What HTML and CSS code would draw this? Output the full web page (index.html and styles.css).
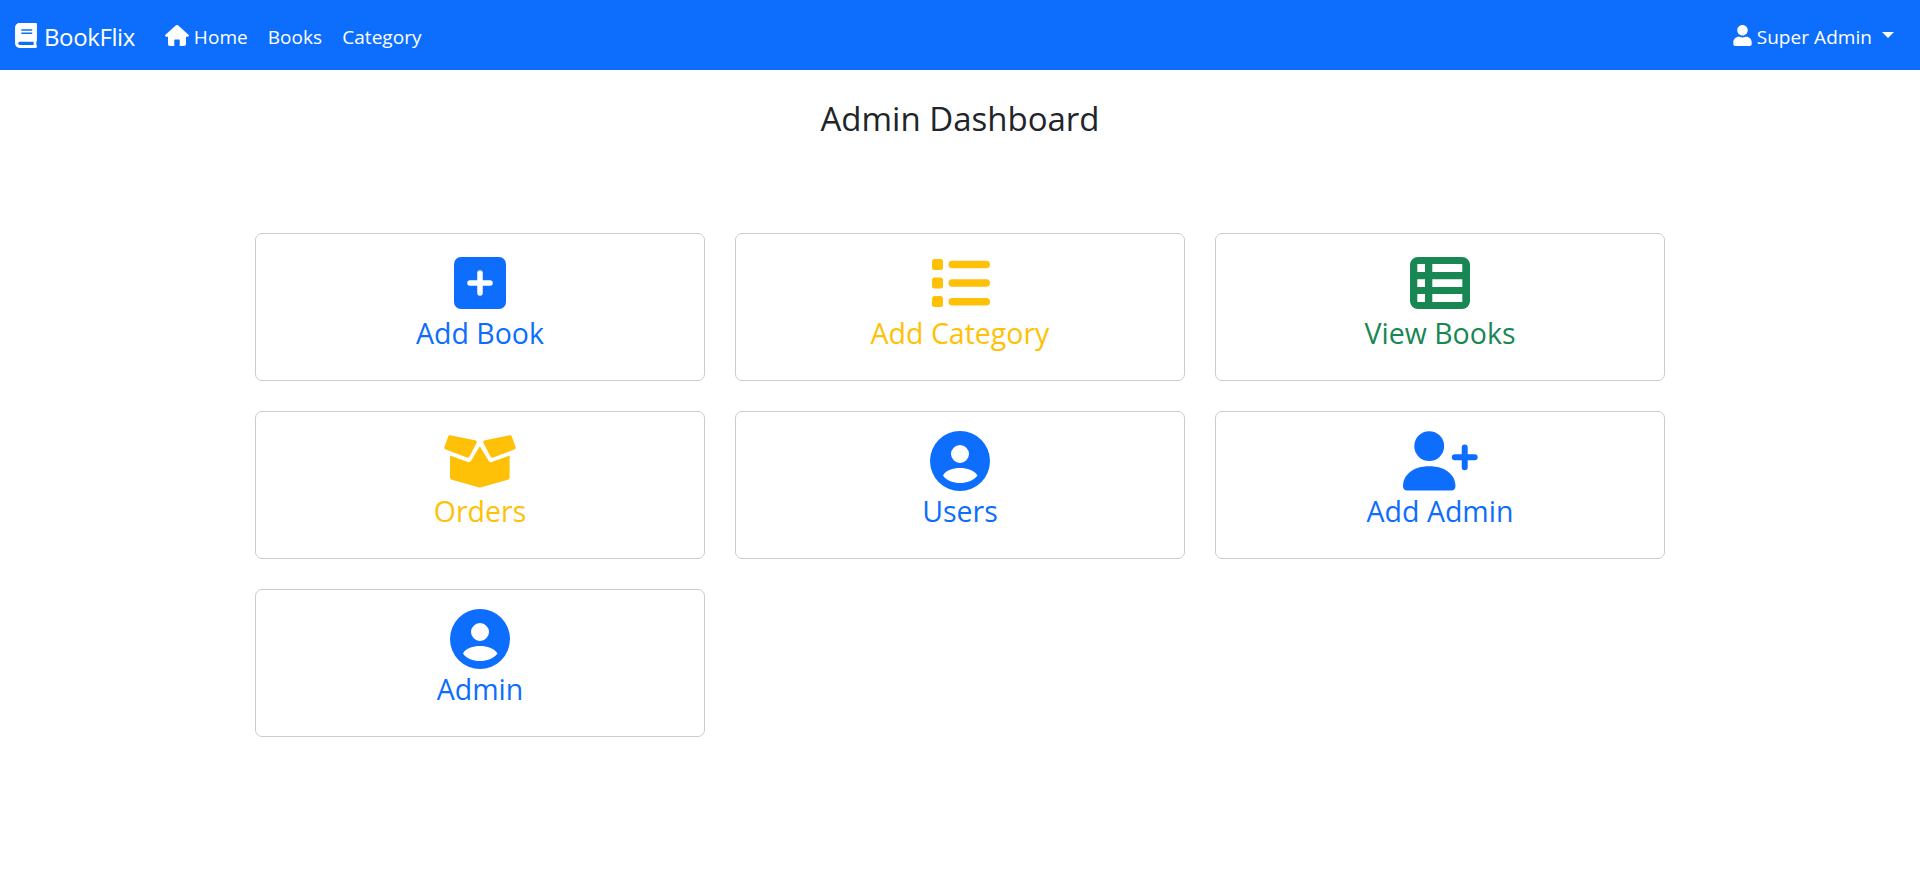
FILE: index.html
```html
<!DOCTYPE html>
<html lang="en">
	<head>
		<meta charset="utf-8">
		<title>BookFlix</title>
		<link rel="stylesheet" href="styles.css">
	</head>
	<body>
		<nav class="navbar">
			<a class="brand" href="#">
				<svg class="brand-icon" viewBox="0 0 448 512"><path d="M448 360V24c0-13.3-10.7-24-24-24H96C43 0 0 43 0 96v320c0 53 43 96 96 96h328c13.3 0 24-10.7 24-24v-16c0-7.5-3.5-14.3-8.9-18.7-4.2-15.4-4.2-59.3 0-74.7 5.4-4.3 8.9-11.1 8.9-18.6zM128 134c0-3.3 2.7-6 6-6h212c3.3 0 6 2.7 6 6v20c0 3.3-2.7 6-6 6H134c-3.3 0-6-2.7-6-6v-20zm0 64c0-3.3 2.7-6 6-6h212c3.3 0 6 2.7 6 6v20c0 3.3-2.7 6-6 6H134c-3.3 0-6-2.7-6-6v-20zm253.4 250H96c-17.7 0-32-14.3-32-32 0-17.6 14.4-32 32-32h285.4c-1.9 17.1-1.9 46.9 0 64z"/></svg>
				BookFlix
			</a>
			<a class="nav-link nav-home" href="#">
				<svg class="home-icon" viewBox="0 0 24 21"><path d="M10.700 0.500L0.500 9.700c-0.800 0.800-0.300 2 0.800 2H3v7.300c0 1.100 0.900 2 2 2h4.300v-5.500c0-0.600 0.400-1 1-1h3.400c0.600 0 1 0.400 1 1V21H19c1.100 0 2-0.900 2-2v-7.300h1.700c1.100 0 1.600-1.200 0.800-2L13.300 0.500c-0.700-0.700-1.900-0.700-2.600 0z"/></svg>
				Home
			</a>
			<a class="nav-link" href="#">Books</a>
			<a class="nav-link" href="#">Category</a>
			<a class="nav-link user-menu" href="#">
				<svg class="user-icon" viewBox="0 0 448 512"><path d="M224 256c70.700 0 128-57.300 128-128S294.700 0 224 0 96 57.300 96 128s57.300 128 128 128zm89.600 32h-16.700c-22.200 10.200-46.900 16-72.900 16s-50.600-5.800-72.900-16h-16.700C60.200 288 0 348.200 0 422.400V464c0 26.500 21.500 48 48 48h352c26.500 0 48-21.500 48-48v-41.600c0-74.200-60.200-134.400-134.400-134.400z"/></svg>
				Super Admin
				<span class="caret"></span>
			</a>
		</nav>

		<h1 class="title">Admin Dashboard</h1>

		<div class="cards">
			<a class="card blue" href="#">
				<span class="icon-box"><svg class="icon" width="52" height="52" viewBox="0 0 52 52"><rect width="52" height="52" rx="7"/><path d="M26 16v20M16 26h20" stroke="#fff" stroke-width="5.500" stroke-linecap="round"/></svg></span>
				<span>Add Book</span>
			</a>
			<a class="card yellow" href="#">
				<span class="icon-box"><svg class="icon" width="60" height="48" viewBox="-2 0 60 48"><rect width="11" height="11" rx="2.500"/><rect y="18.500" width="11" height="11" rx="2.500"/><rect y="37" width="11" height="11" rx="2.500"/><rect x="16.500" y="1.700" width="41.500" height="7.500" rx="3.700"/><rect x="16.500" y="20.300" width="41.500" height="7.500" rx="3.700"/><rect x="16.500" y="39" width="41.500" height="7.500" rx="3.700"/></svg></span>
				<span>Add Category</span>
			</a>
			<a class="card green" href="#">
				<span class="icon-box"><svg class="icon" width="60" height="52" viewBox="0 0 60 52"><path fill-rule="evenodd" d="M8 0h44a8 8 0 0 1 8 8v36a8 8 0 0 1-8 8H8a8 8 0 0 1-8-8V8a8 8 0 0 1 8-8zM7.300 7v8H15V7zm0 15.300V30H15v-7.700zm0 14.700v8H15v-8zM22.300 7v8h30V7zm0 15.300V30h30v-7.700zm0 14.700v8h30v-8z"/></svg></span>
				<span>View Books</span>
			</a>
			<a class="card yellow" href="#">
				<span class="icon-box"><svg class="icon" width="72" height="53" viewBox="133 44 215 160"><path d="M151 45l74 15c5 1 7 4 5 8l-21 41c-2 3-4 4-8 3l-64-24c-3-1-5-4-4-7l11-32c1-3 4-5 7-4zM330 45l-74 15c-5 1-7 4-5 8l21 41c2 3 4 4 8 3l64-24c3-1 5-4 4-7l-11-32c-1-3-4-5-7-4z"/><path d="M150 106l52 19c5 2 9 1 12-4l26-43 26 43c3 5 7 6 12 4l52-19v64c0 5-3 9-8 10l-78 22c-3 1-5 1-8 0l-78-22c-5-1-8-5-8-10z"/></svg></span>
				<span>Orders</span>
			</a>
			<a class="card blue" href="#">
				<span class="icon-box"><svg class="icon" width="60" height="60" viewBox="0 0 60 60"><path fill-rule="evenodd" d="M30 0a30 30 0 1 1 0 60a30 30 0 1 1 0-60zM30 14a9 9 0 1 0 0 18a9 9 0 1 0 0-18zM13 44.500C17 50 23 52 30 52s13-2 17.500-7.500C44 39 37 37 30 37s-14 2-17 7.500z"/></svg></span>
				<span>Users</span>
			</a>
			<a class="card blue" href="#">
				<span class="icon-box"><svg class="icon" width="75" height="60" viewBox="127 34 226 180"><circle cx="206" cy="79" r="45"/><path d="M127 200c0-34 30-60 79-60s79 26 79 60c0 8-5 13-13 13H140c-8 0-13-5-13-13z"/><path d="M313 83v60M283 113h60" stroke="currentColor" fill="none" stroke-width="18" stroke-linecap="round"/></svg></span>
				<span>Add Admin</span>
			</a>
			<a class="card blue" href="#">
				<span class="icon-box"><svg class="icon" width="60" height="60" viewBox="0 0 60 60"><path fill-rule="evenodd" d="M30 0a30 30 0 1 1 0 60a30 30 0 1 1 0-60zM30 14a9 9 0 1 0 0 18a9 9 0 1 0 0-18zM13 44.500C17 50 23 52 30 52s13-2 17.500-7.500C44 39 37 37 30 37s-14 2-17 7.500z"/></svg></span>
				<span>Admin</span>
			</a>
		</div>
	</body>
</html>
```

FILE: styles.css
```css
body { margin: 0; color: #212529; background-color: white; font-family: "Open Sans", "Noto Sans", sans-serif; }
a { text-decoration: none; }

.navbar {
	display: flex;
	align-items: center;
	height: 70px;
	padding: 3px 15px 0;
	box-sizing: border-box;
	background-color: #0d6efd;
}
.brand {
	display: flex;
	align-items: center;
	gap: 7px;
	margin-right: 20px;
	color: white;
	font-size: 24px;
	letter-spacing: -0.4px;
}
.brand-icon { width: 22px; height: 25px; fill: white; margin-top: -3px; }
.nav-link {
	display: flex;
	align-items: center;
	padding: 0 10px;
	color: white;
	font-size: 19px;
	letter-spacing: 0.05px;
}
.nav-home { gap: 5px; }
.home-icon { width: 24px; height: 21px; fill: white; margin-top: -3px; }
.user-icon { width: 19px; height: 21px; fill: white; margin-right: 5px; margin-top: -3px; }
.user-menu { margin-left: auto; padding-right: 11px; }
.caret {
	margin-left: 10px;
	margin-top: -3px;
	border-top: 6px solid white;
	border-left: 6px solid transparent;
	border-right: 6px solid transparent;
}

.title {
	margin: 0;
	padding-top: 26px;
	height: 139px;
	box-sizing: border-box;
	font-size: 33px;
	font-weight: 400;
	line-height: 46px;
	text-align: center;
}

.cards {
	display: grid;
	grid-template-columns: repeat(3, 450px);
	grid-auto-rows: 148px;
	gap: 30px;
	justify-content: center;
	margin-top: 24px;
}
.card {
	display: flex;
	flex-direction: column;
	align-items: center;
	padding-top: 19px;
	border: 1px solid #ccc;
	border-radius: 7px;
	font-size: 28.5px;
	line-height: 40px;
}
.icon-box {
	display: flex;
	align-items: center;
	justify-content: center;
	height: 60px;
}
.icon { display: block; fill: currentColor; }
.blue { color: #0d6efd; }
.yellow { color: #ffc107; }
.green { color: #198754; }
```
